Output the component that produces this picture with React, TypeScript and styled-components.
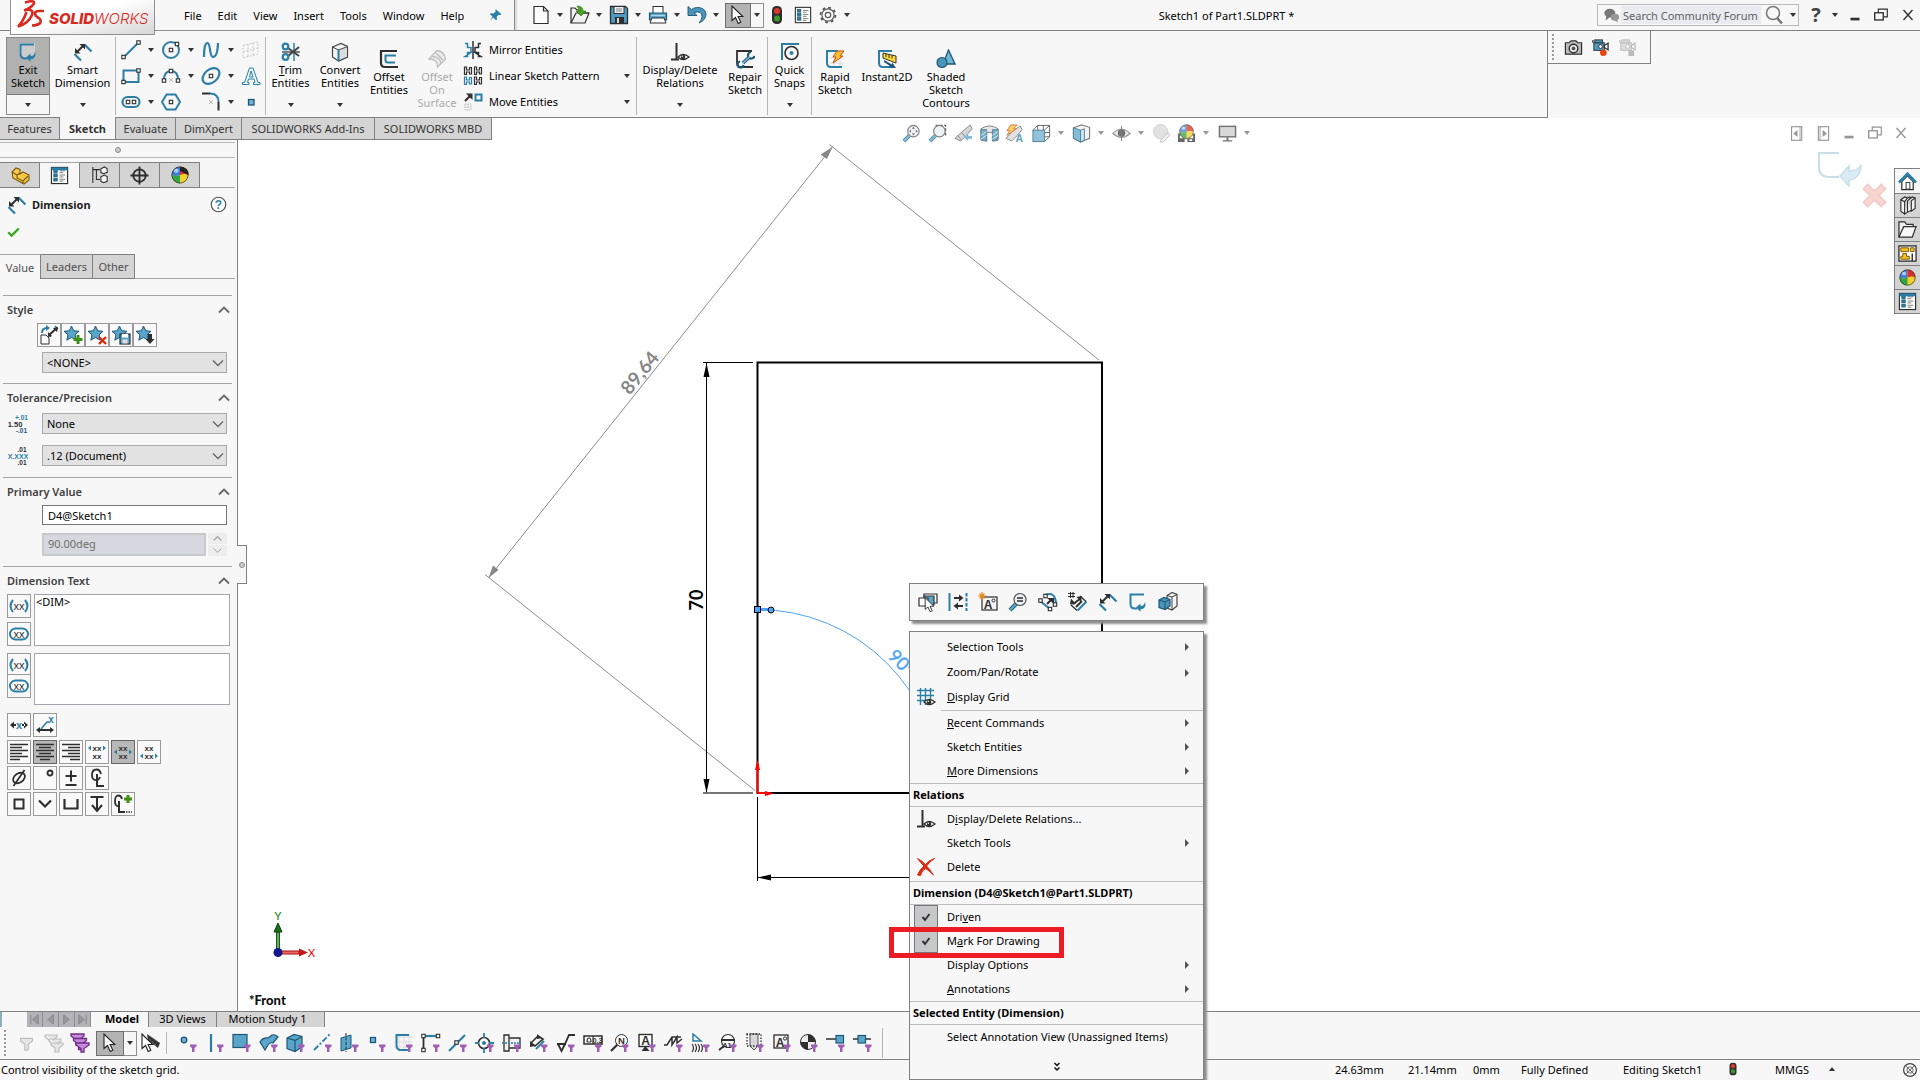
import React from 'react';
import styled, { createGlobalStyle, css } from 'styled-components';

const FONT = `"Noto Sans", "Open Sans", "Segoe UI", sans-serif`;
const LINE = '#808080';
const FACE = '#f7f7f7';
const TAB = '#d4d4d4';
const B = '#2b7fa6';
const N = '#1d5676';
const D = '#2f2f2f';
const L = '#6fb5d6';

const Global = createGlobalStyle`
  * { box-sizing: border-box; }
  html, body { margin: 0; background: #fff; }
  body, button, input, select, textarea { font-family: ${FONT}; font-size: 11px; line-height: 13px; color: #000; }
  button, input, select, textarea { margin: 0; border-radius: 0; }
  button { padding: 0; border: 0; background: none; }
  svg { display: block; flex: none; }
`;

/* ---------- icon drawings, all on a 20 x 20 grid ---------- */

const line = (d: string, c = D, w = 1.5) => <path d={d} fill="none" stroke={c} strokeWidth={w} />;
const node = (x: number, y: number, s = 3.4) => (
  <rect x={x - s / 2} y={y - s / 2} width={s} height={s} fill="#fff" stroke={D} strokeWidth="1.1" />
);
const Star = () => (
  <path d="M8.500 1l2.200 4.800 5.300.5-4 3.600 1.200 5.300-4.700-2.800-4.700 2.800L5 9.900 1 6.300l5.300-.5z" fill="#5aa6ca" stroke={N} strokeWidth="1" />
);
const Eye = ({ x = 12, y = 15 }) => (
  <g transform={`translate(${x} ${y})`}>
    <path d="M-5 0Q0-5 6 0Q0 5-5 0z" fill="#fff" stroke={D} strokeWidth="1.300" />
    <circle r="2.300" fill={D} />
    <circle cx="-.7" cy="-.7" r=".7" fill="#fff" />
  </g>
);
const Funnel = () => <path d="M12 11.500h6.500v2l-2 1.500v4h-2.500v-4l-2-1.500z" fill="#a05fb5" />;
const Dim = () => (
  <>
    {line('M11.500 2.500L18.500 9.500', B, 2.200)}
    {line('M1.500 12L8 18.500', B, 2.200)}
    {line('M4 10L10 4', D, 2)}
    <path d="M2 11.500V6l5.500 5.500zM12 2v5.500L6.500 2z" fill={D} />
  </>
);
const Corner = () => (
  <>
    {line('M16 2.500H2.500V12Q2.500 16.500 7 16.500H9', B, 2)}
    <path d="M8 15.500l4.500-4v2.500q4 0 4.500-4.500 2 7-4.500 8v2.300z" fill={B} />
  </>
);
const Ball = ({ r = 8, cx = 10, cy = 10 }) => (
  <g transform={`translate(${cx} ${cy}) scale(${r / 8})`}>
    <circle r="8" fill="#f0cf2e" />
    <path d="M0 0V-8A8 8 0 0 0-8 0Q-4 2 0 0z" fill="#3f7fdc" />
    <path d="M0 0V-8A8 8 0 0 1 8 0Q4-2 0 0z" fill="#dc2f2a" />
    <path d="M0 0Q-4 2-8 0A8 8 0 0 0 0 8z" fill="#35a445" />
    <ellipse cx="-3.500" cy="-4" rx="2.200" ry="1.800" fill="#fff" opacity=".6" />
    <circle r="7.600" fill="none" stroke="#333" strokeWidth=".7" />
  </g>
);
const Lens = ({ inner }: { inner?: React.ReactNode }) => (
  <>
    {line('M2 18L8 12', N, 4)}
    {line('M2 18L8 12', '#5aa6ca', 2.400)}
    <circle cx="12" cy="7.500" r="6" fill="#e9eff3" stroke="#555" strokeWidth="1.200" />
    {inner}
  </>
);
const List = () => (
  <>
    <rect x="1.500" y="1.500" width="17" height="17" fill="#fff" stroke={D} strokeWidth="1.200" />
    {[5, 9.500, 14].map((y) => (
      <React.Fragment key={y}>
        <rect x="4" y={y - 1.200} width="3.600" height="3" fill={B} stroke={N} strokeWidth=".8" />
        {line(`M10 ${y}H16M10 ${y + 2}H14`, '#777', 1)}
      </React.Fragment>
    ))}
  </>
);
const Light = () => (
  <>
    <rect x="5" y="1" width="10" height="18" rx="4.500" fill={D} />
    <circle cx="10" cy="6" r="3" fill="#e0362a" />
    <circle cx="10" cy="13.500" r="3" fill="#3b9a2a" />
  </>
);
const Cursor = () => <path d="M4 1v14.500l3.500-3 2.700 6 2.600-1.200-2.700-5.800h4.700z" fill="#fff" stroke="#222" strokeWidth="1.100" />;
const Glyph = ({ x, y, s, c = D, w = 700, children }: { x: number; y: number; s: number; c?: string; w?: number; children: string }) => (
  <text x={x} y={y} fontSize={s} fill={c} fontWeight={w} textAnchor="middle" fontFamily="Liberation Sans, sans-serif">{children}</text>
);
const Camera = ({ c = B, s = N }) => (
  <>
    <rect x="3" y="5" width="11" height="8" fill={c} stroke={s} />
    <rect x="4" y="2" width="8" height="3" fill={c} stroke={s} />
    <path d="M14 8l4-2.500v7L14 10zM2 2v3" fill="none" stroke={s} strokeWidth="1.300" />
    <circle cx="10" cy="9" r="2" fill="#fff" stroke={s} />
  </>
);

const icons: Record<string, React.ReactNode> = {
  exit: <Corner />,
  exitLight: <><path d="M1 1h16v15H8L1 12z" fill="#fff" opacity=".35" /><Corner /></>,
  dim: <Dim />,
  line: <>{line('M2.500 17.500L17.500 2.500', B, 2)}{node(2.500, 17)}{node(17.500, 2.500)}</>,
  circle: <><circle cx="10" cy="10" r="8" fill="none" stroke={B} strokeWidth="2" />{node(10, 10)}{node(16, 4)}</>,
  spline: line('M3 17Q3 3 6.500 3C10 3 8 17 12 17Q16.500 17 17 3', B, 2.200),
  plane: <path d="M2 5.500L17 2v12L2 18zM2 12L17 8M7 4v13M12 3v13" fill="none" stroke="#c9c9c9" strokeDasharray="2 1.400" />,
  rect: <>{line('M2.500 4.500H17.500V16H2.500z', B, 2)}{node(17.500, 4.500)}{node(2.500, 16)}</>,
  arc: <>{line('M3 14Q3 5 10 5Q17 5 17 14', B, 2)}{node(3, 14.500)}{node(17, 14.500)}{node(10, 5)}{line('M8 12l4 4M12 12l-4 4', '#bbb', 1)}</>,
  ellipse: <><ellipse cx="10" cy="10" rx="9.500" ry="6.500" transform="rotate(-40 10 10)" fill="none" stroke={B} strokeWidth="2.200" />{node(10, 10)}</>,
  text: <path d="M8.500 2h3.500l5 14.500h2v2h-6.500v-2H14l-1-3.500H7.500l-1 3.500h1.500v2H1.500v-2h2zM8.500 11H12l-2-6z" fill="#eef6fa" stroke={B} strokeWidth="1" />,
  slot: <><rect x="1.500" y="5" width="17" height="10" rx="5" fill="none" stroke={B} strokeWidth="2.200" />{node(7, 10)}{node(13, 10)}</>,
  polygon: <><path d="M5.500 2.500h9L19 10l-4.500 7.500h-9L1 10z" fill="none" stroke={B} strokeWidth="2" />{node(10, 10)}</>,
  fillet: <>{line('M1 1.500H9', D, 2)}{line('M9 1.500Q17.500 1.500 17.500 10', B, 2)}{line('M17.500 10V18.500', D, 2)}{line('M8 8l4 4M12 8l-4 4', '#bbb', 1)}</>,
  point: <rect x="7.500" y="7.500" width="5.500" height="5.500" fill={L} stroke={N} strokeWidth="1.300" />,
  trim: <>{line('M1 10H19', '#555', 1.500)}{line('M13 1V19', B, 1.500)}{line('M7 6L18 14M7 14L18 5', '#444', 2)}<circle cx="4.500" cy="4.500" r="2.800" fill="none" stroke={B} strokeWidth="2.200" /><circle cx="4.500" cy="15" r="2.800" fill="none" stroke={B} strokeWidth="2.200" /></>,
  convert: <><path d="M2.500 5L11 1.500 17.500 4.500V15L8.500 19l-6-4z" fill="#f4f4f4" stroke="#444" strokeWidth="1.200" /><path d="M8.500 8l9-3.500V15l-9 4z" fill="#dcdcdc" stroke="#444" />{line('M2.500 5L8.500 8', '#444', 1)}{line('M8.500 7.500V19', B, 2)}</>,
  offset: <>{line('M18 2H2V14Q2 18 6 18H19', D, 2.200)}{line('M17 6.500H6.500V11Q6.500 13.500 9 13.500H16', B, 2)}</>,
  offsetSurf: <path d="M2 10L10 1.500Q17 2 18.500 10L10.500 18Q11 10 2 10zM5.500 7.500Q13 8 14 14.500M9 4l7 7" fill="#ececec" stroke="#bdbdbd" strokeWidth="1.300" />,
  mirror: <>{line('M10 1V19', D, 1.500)}{line('M2 3.500h2.500v4H8M8 12.500H4.500v4H2zM8 7v6', B, 1.500)}{line('M18 3.500h-2.500v4H12M12 12.500h3.500v4H18zM12 7v6', D, 1.500)}</>,
  pattern: <>{[[0, 0, D], [10, 0, D], [0, 10, B], [10, 10, D]].map(([x, y, c]) => (
    <path key={`${x}${y}`} transform={`translate(${x} ${y})`} d="M1.500 1h2v3h3V1.500h2v6.500h-2V6h-3v2.500h-2z" fill="none" stroke={c as string} strokeWidth="1.200" />
  ))}</>,
  move: <><rect x="12.500" y="2.500" width="6" height="6" fill="none" stroke={B} strokeWidth="2" />{line('M2 9L7 4', D, 2.200)}<path d="M3 1.500h6.500V8z" fill={D} /><path d="M2 12h6v6H2zM2 15h6M5 12v6" fill="none" stroke="#bbb" strokeDasharray="1.500 1" /></>,
  relations: <>{line('M6.500 1V17.500M1 17.500H9', D, 2)}<Eye x={13} y={15} /></>,
  repair: <>{line('M17 2H2V14Q2 18 6 18H18', D, 1.800)}<path d="M8 14L14.500 8" stroke={N} strokeWidth="3.600" /><path d="M5 12.500a3 3 0 1 0 3.500 3.500M13.500 8a3.300 3.300 0 0 1 2.500-5M14.500 9a3.300 3.300 0 0 0 5-2" fill="none" stroke={N} strokeWidth="2.200" /><path d="M7.500 14.500L14.500 8" stroke="#8cc4de" strokeWidth="1.400" /></>,
  snaps: <>{line('M1 2H19M2 1V18', B, 2)}<circle cx="11.500" cy="11" r="6.500" fill="none" stroke={D} strokeWidth="1.600" /><circle cx="11.500" cy="11" r="2" fill={B} /></>,
  rapid: <>{line('M5 9H19M5 14H19M9 5V19M15 5V19', '#ddd', 1)}{line('M13 2H2V14Q2 18 6 18H17', B, 2)}<path d="M12 2h7l-4 5h3L8 14l3-6H8z" fill="#f6c02d" stroke="#c4521b" strokeWidth="1" /></>,
  instant: <>{line('M15 2H2V14Q2 18 6 18H17', B, 2)}<path d="M6 4l13 3v7L6 9z" fill="#ffd83a" stroke="#333" />{line('M9 5v3M12 6v3M15 6.500v3', '#333', 1)}<path d="M7 11l8 4.500v-2.500l4 6-7-.5 1-1.500L7 13z" fill={N} /></>,
  shaded: <><path d="M12.500 1L19 15H7z" fill={L} stroke={N} strokeWidth="1.300" /><circle cx="6" cy="13.500" r="5" fill="#4b95ba" stroke={N} strokeWidth="1.200" /></>,
  file: <><path d="M3 1.500h9.500L17 6v12.500H3z" fill="#fff" stroke={D} strokeWidth="1.200" />{line('M12.500 1.500V6H17', D, 1.200)}</>,
  open: <><path d="M1 18V3h4l2 2h4v3h8l-4 10z" fill="#f2f2f2" stroke={D} strokeWidth="1.200" />{line('M1 18L6 8h13', D, 1.200)}<path d="M7 1q6 0 6 5h3l-5 5-5-5h3q0-3-2-5z" fill="#47a31c" stroke="#2b7010" strokeWidth=".6" /></>,
  save: <><path d="M1.500 1.500h15l2 2v15h-17z" fill="#4e9cc2" stroke={D} strokeWidth="1.300" /><rect x="5" y="1.500" width="10" height="7" fill="#f0f0f0" stroke={D} /><rect x="6" y="12" width="9" height="6.500" fill={D} /><rect x="8" y="13" width="2" height="5" fill="#ddd" />{line('M7 4h6M7 6h6', '#888', 1)}</>,
  print: <><rect x="5" y="1.500" width="10" height="7" fill="#fff" stroke={D} /><path d="M1.500 8h17v7h-17z" fill="#4e9cc2" stroke={N} strokeWidth="1.200" /><path d="M4 13h12l2 5H2z" fill="#fff" stroke={D} />{line('M3 10.500H17', '#a7d6eb', 1.500)}</>,
  undo: <path d="M1 1.500v9h9L7 7.500q8-2 8 4 0 3-3 6.500 7-3 7-9Q18 2 9.500 2.500 6 3 4.500 4.500z" fill="#4b95ba" stroke={N} strokeWidth=".9" />,
  cursor: <Cursor />,
  light: <Light />,
  list: <List />,
  gear: <><circle cx="10" cy="10" r="6.800" fill="none" stroke="#555" strokeWidth="1.300" /><circle cx="10" cy="10" r="8.300" fill="none" stroke="#555" strokeWidth="2" strokeDasharray="3 3.520" /><circle cx="10" cy="10" r="3" fill="none" stroke="#555" strokeWidth="1.300" /></>,
  pin: <path d="M10 2l8 7-2 1-2-.5-3 3 .5 4-1.500 1-4-4L1.500 18 5 12 1 8.500l1.500-1 4 .5 3-3-.5-2z" fill={B} />,
  chat: <><ellipse cx="8" cy="7" rx="6.500" ry="5" fill="#777" /><path d="M4 10l-1 6 5-4z" fill="#777" /><ellipse cx="14" cy="12" rx="5" ry="4" fill="#999" /><path d="M16 14l2 4-5-2z" fill="#999" /></>,
  search: <><circle cx="9" cy="8" r="6.500" fill="none" stroke="#777" strokeWidth="1.500" />{line('M13 13L18 18.500', '#777', 2.600)}</>,
  min: <rect x="5" y="13" width="10" height="3" fill={D} />,
  restore: <>{line('M7 7V3.500H17V12H13', D, 1.300)}<rect x="3" y="7.500" width="9.500" height="8" fill="none" stroke={D} strokeWidth="1.500" /></>,
  close: line('M5 4.500L15 15.500M15 4.500L5 15.500', D, 1.500),
  snapshot: <><path d="M1.500 5h4l2-2h5l2 2h4v12h-17z" fill="#bdbdbd" stroke={D} strokeWidth="1.300" /><circle cx="10" cy="11" r="4.500" fill="#eee" stroke={D} strokeWidth="1.500" /><circle cx="10" cy="11" r="2" fill="#555" /></>,
  record: <><Camera c="#4e9cc2" s={D} /><circle cx="13" cy="15.500" r="3.500" fill="#e8420f" /></>,
  stop: <><Camera c="#ddd" s="#bbb" /><rect x="11" y="13" width="6" height="6" fill="#bbb" /></>,
  zoomFit: <Lens inner={<path d="M12 3l1.500 2h-3zM12 12l1.500-2h-3zM7.500 7.500l2-1.500v3zM16.500 7.500l-2-1.500v3z" fill={D} />} />,
  zoomArea: <><path d="M8 1.500h10.500v12" fill="none" stroke={D} strokeDasharray="3 1.500" strokeWidth="1.300" /><Lens /></>,
  prevView: <><path d="M1 15l10-9 6-5 2 4-5 6-7 7z" fill="#c9c9c9" stroke="#666" />{line('M4 12l4 5M8 9l4 5', '#666', 1)}<path d="M10 14l5-4v2.500h4v3h-4V18z" fill="#5aa6ca" /></>,
  section: <><path d="M1 5Q10-1 19 5v12l-5 1V9H7v9l-6-1z" fill="#dedede" stroke="#555" /><path d="M1 6h6v12l-6-2zM13 6h6v10l-6 2z" fill="#4b95ba" stroke={N} />{line('M1 12l6-4M1 16l6-4M13 12l6-4M13 16l6-4', '#cde6f1', 1)}</>,
  annView: <><path d="M1 15l8-8 7-5 2 4-5 6-6 6z" fill="#d8d8d8" stroke="#666" /><path d="M6 1h7l-4 4h3L2 12l3-5H2z" fill="#f6c02d" stroke="#c4521b" /><Glyph x={15} y={19} s={11} c={B}>A</Glyph></>,
  viewCube: <><path d="M6 1.500h12.500v12H6zM1 6.500l5-5M13 6.500l5.500-5M13 18.500l5.500-5M12 1.500v5M13 9h5" fill="none" stroke={D} /><rect x="1" y="6.500" width="12" height="12" fill="#6db0d0" stroke={N} /></>,
  display: <><path d="M1.500 4L10 1l8.500 2.500V15L9 19l-7.500-4z" fill="#f0f0f0" stroke="#555" strokeWidth="1.200" /><path d="M1.500 4L9 6.500V19l-7.500-4z" fill="#5aa6ca" stroke={N} /><path d="M9 6.500l4-1.500v12L9 19z" fill="#bfe0ee" stroke={N} /></>,
  hide: <><path d="M1 10Q10 1 19 10Q10 18 1 10z" fill="#e8e8e8" stroke="#777" strokeWidth="1.200" /><circle cx="10" cy="9.500" r="4" fill="#444" />{line('M10 2V18', '#555', 1)}</>,
  appearOff: <><circle cx="9" cy="8" r="7.500" fill="#d9d9d9" stroke="#c4c4c4" /><path d="M9 17l8-8 2 2-7 8-3 0z" fill="#eee" stroke="#aaa" /></>,
  scene: <><rect x="1" y="10" width="18" height="9" fill="#333" /><path d="M3 12h3v3H3zM14 12h3v3h-3zM8 16h3v3H8zM13 16h3v2h-3z" fill="#fff" /><Ball r={7.500} cx={10} cy={8} /></>,
  monitor: <><rect x="1.500" y="2.500" width="17" height="11" fill="#ccc" stroke="#444" strokeWidth="1.500" /><path d="M9 14h2v3h4v1.500H5V17h4z" fill="#444" /></>,
  paneL: <><rect x="3" y="2" width="12" height="16" fill="none" stroke={D} strokeWidth="1.300" /><path d="M10 6v8L5 10z" fill={D} />{line('M13 2v16', D, 1)}</>,
  paneR: <><rect x="4" y="2" width="12" height="16" fill="none" stroke={D} strokeWidth="1.300" /><path d="M9 6v8l5-4z" fill={D} />{line('M6 2v16', D, 1)}</>,
  part: <path d="M2 7l4-4 4 1.500V9l3-2 6 3v5l-5 4L3 13zM2 7l5 3v3l6 3v3M13 16l5-5M7 10l3-2" fill="#f7c948" stroke="#7a5a10" strokeWidth="1.100" />,
  tree: <>{line('M2 1V19M2 4h8M6 4v11h4', D, 1.200)}<path d="M11 3l4-2 3 2v4l-4 1.500-3-1.500zM11 12l4-2 3 2v5l-4 1.500-3-1.500z" fill="#f4f4f4" stroke={D} strokeWidth="1.200" /></>,
  target: <><circle cx="10" cy="10" r="6.500" fill="none" stroke={D} strokeWidth="2" />{line('M10 .5V19.500M.5 10H19.500', D, 2)}</>,
  ball: <Ball r={8.500} />,
  ballDim: <><Ball r={8.500} /><path d="M10 2q9 0 8.500 8L10 6z" fill="#222" /></>,
  check: line('M3 11l4.500 4.500L17 6', '#3aa51c', 3),
  help: <><circle cx="10" cy="10" r="8.500" fill="#fff" stroke="#555" strokeWidth="1.400" /><Glyph x={10} y={15} s={14} c={B}>?</Glyph></>,
  web: <><circle cx="10" cy="10" r="8" fill="#fff" stroke="#444" strokeWidth="1.600" /><circle cx="10" cy="10" r="4" fill="none" stroke="#444" />{line('M4 4l12 12M16 4L4 16', '#444', 1)}</>,
  styApply: <><path d="M2 10h5l3 3v6H2z" fill="#fff" stroke={D} />{line('M3 8Q3 3 8 3', B, 2)}<path d="M7 0l4 3-4 3z" fill={B} />{line('M16 1l3 3M9 9l3 3', B, 1.500)}{line('M10 10l8-7', D, 2)}<path d="M9 12l0-5 4 4zM19 2l-1 5-4-4z" fill={D} /></>,
  styAdd: <><Star />{line('M15 10v9M10.500 14.500h9', '#3d8f15', 3)}</>,
  styDel: <><Star />{line('M12 12l7 7M19 12l-7 7', '#dd2b12', 2.400)}</>,
  stySave: <><Star /><rect x="9" y="9" width="10" height="10" fill="#5aa6ca" stroke={D} strokeWidth="1.200" /><rect x="11" y="9" width="6" height="3.500" fill="#fff" /><rect x="11.500" y="14.500" width="5" height="4" fill="#ddd" /></>,
  styLoad: <><Star /><path d="M13 9h4v5h2.500L15 19l-4.500-5H13z" fill={D} /></>,
  tol: <><Glyph x={13.500} y={6} s={6.500} c={B}>+.01</Glyph><Glyph x={7} y={12.500} s={7.500} w={700}>1.50</Glyph><Glyph x={13.500} y={19} s={6.500} c={N}>-.01</Glyph></>,
  prec: <><Glyph x={14} y={6} s={6.500}>.01</Glyph><Glyph x={10} y={12.500} s={7} c={B}>X.XXX</Glyph><Glyph x={14} y={19} s={6.500}>.01</Glyph></>,
  paren: <><Glyph x={10} y={13.500} s={11} w={400}>xx</Glyph>{line('M4 4Q-1 10 4 16M16 4Q21 10 16 16', B, 2)}</>,
  oval: <><rect x="1" y="4.500" width="18" height="11" rx="5.500" fill="#fff" stroke={B} strokeWidth="2" /><Glyph x={10} y={13.500} s={11} w={400}>xx</Glyph></>,
  center: <><Glyph x={10} y={14} s={11} c={B}>x</Glyph><path d="M1 10l4-3.500v7zM19 10l-4-3.500v7zM4 9h3v2H4zM13 9h3v2h-3z" fill={D} /></>,
  leader: <><path d="M1 15l4-3v2h10v-2l4 3-4 3v-2H5v2z" fill={D} />{line('M6 14l6-7h2', B, 1.500)}<Glyph x={16} y={8} s={10} c={B}>x</Glyph></>,
  alignL: line('M1 2.500H19M1 5.500H13M1 8.500H19M1 11.500H13M1 14.500H19M1 17.500H11', D, 1.700),
  alignC: line('M1 2.500H19M4 5.500H16M1 8.500H19M4 11.500H16M1 14.500H19M5 17.500H15', D, 1.700),
  alignR: line('M1 2.500H19M7 5.500H19M1 8.500H19M7 11.500H19M1 14.500H19M9 17.500H19', D, 1.700),
  jTop: <><Glyph x={10} y={8.500} s={8}>xx</Glyph><Glyph x={10} y={17} s={8}>xx</Glyph><path d="M1 6l3-2.500v5zM19 6l-3-2.500v5z" fill={B} /></>,
  jMid: <><Glyph x={10} y={8.500} s={8}>xx</Glyph><Glyph x={10} y={17} s={8}>xx</Glyph><path d="M1 10l3-2.500v5zM19 10l-3-2.500v5z" fill={B} /></>,
  jBot: <><Glyph x={10} y={8.500} s={8}>xx</Glyph><Glyph x={10} y={17} s={8}>xx</Glyph><path d="M1 14l3-2.500v5zM19 14l-3-2.500v5z" fill={B} /></>,
  dia: <><ellipse cx="10" cy="10" rx="6.500" ry="4.500" transform="rotate(-35 10 10)" fill="none" stroke={D} strokeWidth="1.800" />{line('M4.500 18L15.500 2', D, 1.800)}</>,
  deg: <circle cx="15" cy="5" r="2.500" fill="none" stroke={D} strokeWidth="1.800" />,
  pm: line('M10 2.500V13.500M4.500 8H15.500M4.500 17H15.500', D, 2),
  cl: <>{line('M14 6Q13 1.500 9.500 1.500 5 1.500 5 7t4.500 5Q12 12 13 9', D, 1.800)}{line('M10 6V18h7', D, 2)}</>,
  sq: <rect x="5.500" y="5.500" width="9" height="9" fill="none" stroke={D} strokeWidth="2" />,
  vee: line('M4 6.500l6 6 6-6', D, 2.200),
  cbore: line('M3.500 5V14.500H16.500V5', D, 2.200),
  depth: <>{line('M3.500 3H16.500M10 3V16', D, 2)}{line('M5 11l5 6 5-6', D, 2)}</>,
  clMore: <>{line('M9 5Q8 1.500 5.500 1.500 2 1.500 2 7t3.500 5', D, 1.800)}{line('M6 7V18h6', D, 2)}{line('M15 1v8M11 5h8', '#3d8f15', 3)}<path d="M13 18h6" stroke={D} strokeWidth="1.500" strokeDasharray="1.500 1" /></>,
  addSel: <><path d="M6 5V2h13v9h-4" fill="#fff" stroke={D} strokeWidth="1.200" /><path d="M6 4h10v9H6z" fill="#5aa6ca" stroke={D} strokeWidth="1.200" /><path d="M1 6h9v8H1z" fill="#fff" stroke={D} strokeWidth="1.200" /><g transform="translate(4 5) scale(.8)"><Cursor /></g></>,
  smartMate: <>{line('M1.500 1V19', B, 2)}<path d="M18.500 1V19" stroke={B} strokeWidth="2" strokeDasharray="3.500 1.500" /><path d="M6 5h5V2.500L15.500 6 11 9.500V7H6zM15 13h-5v-2.500L5.500 14l4.500 3.500V15h5z" fill={D} /></>,
  newNote: <><rect x="4" y="5" width="15" height="13" fill="#f4f4f4" stroke={D} strokeWidth="1.200" /><Glyph x={10} y={16.500} s={12}>A</Glyph><circle cx="15.500" cy="8.500" r="1.500" fill="none" stroke={D} />{line('M4 0v8M0 4h8M1.500 1.500l5 5M6.500 1.500l-5 5', '#e08a1e', 1.200)}</>,
  zoomSel: <Lens inner={line('M9 6h6M9 9h6', D, 1.300)} />,
  sketchDim: <>{line('M2 9l10 8', B, 2)}{line('M7 3Q17-1 18 11', B, 2)}{node(2.500, 8.500)}{node(7.500, 4)}{node(17, 12.500)}{node(12, 17)}{line('M9 12l4-4', D, 2)}<path d="M9 6h7v6z" fill={D} /></>,
  autoDim: <>{line('M2.500 0v6M5 0v6M0 1.500h7M0 4.500h7', D, 1)}{line('M9.500 18.500L18.500 9.500', B, 2.200)}{line('M3 13L9 18.500M12 4L18 9.500', D, 1.300)}{line('M5 12L12 7', D, 2)}<path d="M2 12.500l1-6 5 5.500zM14 4l-5.500 1 4.500 5zM7 15l7-5" fill={D} />{line('M8 15L14 9', D, 2)}</>,
  bodyView: <><path d="M9 3.500l5-3 5 2V14l-5 4-5-2z" fill="#f4f4f4" stroke="#444" strokeWidth="1.200" />{line('M14 5v13M9 3.500l5 1.500 5-2.500', '#444', 1)}<path d="M1 8l5-2.500 6 2V14l-5 3.500-6-2z" fill="#4b95ba" stroke={N} strokeWidth="1.200" />{line('M1 8l6 2v7M7 10l5-2.500', N, 1)}</>,
  grid: <>{line('M4.500 1V18M9.500 1V18M14.500 1V12M1 3.500H18M1 8.500H18M1 13.500H9', B, 1.400)}<Eye x={13} y={15} /></>,
  del: <path d="M1.500 1.500Q9 5 17.500 18q-5-5-8-6.500Q6 13 4.500 18.500L1.500 18Q4 12 8 9 4 5 1.500 1.500zM18.500 1.500Q13 5 10.500 9l-1-1.500Q13 3 18.500 1.500z" fill="#dd2b12" stroke="#dd2b12" strokeWidth="1" />,
  house: <><path d="M4 10v8.500h12V10l-6-6z" fill="#fff" stroke={D} strokeWidth="1.300" /><rect x="8.500" y="11" width="4" height="7" fill="#fff" stroke={D} />{line('M1 11L10 2l9 9', B, 3)}</>,
  books: <path d="M3 4l4 2v13l-4-3zM7 6l3-4-3-1-4 3M7 6v13l3-2M10 5l4-3-2-1-3 2M10 5v12l4-2M14 5l4-3-3-1-3 2M14 5v11l4-3V2" fill="#f4f4f4" stroke={D} strokeWidth="1.200" />,
  folder: <><path d="M1 18V2h6l2 2.500h7V7" fill="#eee" stroke={D} strokeWidth="1.300" /><path d="M1 18L6 7h13l-4 11z" fill="#f7f7f7" stroke={D} strokeWidth="1.300" /></>,
  palette: <><rect x="1" y="2" width="18" height="16" fill="#fff" stroke={D} strokeWidth="1.400" /><path d="M3 4h8v4H3zM13 4h4v4h-4zM5 10h4v3h3v3H3v-3h2z" fill="#f4c21c" stroke="#7a5a10" />{line('M15 10v8', D, 1.500)}</>,
  props: <><List /><rect x="1.500" y="1.500" width="17" height="3" fill={B} /></>,
  funnelOff: <path d="M3 4h14v3l-5 4v7H8v-7L3 7z" fill="#e6e6e6" stroke="#bdbdbd" strokeWidth="1.300" />,
  funnelsOff: <path d="M1 2h12v2l-4 3M5 6h12v2l-4 3M7 10h12v2l-4 3v4h-4v-4l-4-3zM1 2v2l5 4M5 6v2l3 3" fill="#e6e6e6" stroke="#bdbdbd" strokeWidth="1.200" />,
  funnels: <>{['M1 1h13v2l-5 4v5H6V7L1 3z', 'M3.500 5.500h13v2l-5 4v5h-3v-5l-5-4z', 'M6 10h13v2l-5 3.500V19h-3v-3.500L6 12z'].map((d) => <path key={d} d={d} fill="#c58ad8" stroke="#6b2c86" strokeWidth="1.300" />)}</>,
  multi: <><path d="M6 1l13 9-2 5L7 7z" fill="#333" /><path d="M9 3l8 6M8 6l7 6" stroke="#888" strokeDasharray="1 1" /><g transform="translate(-3 0)"><Cursor /></g></>,
};

const filters: React.ReactNode[] = [
  <circle cx="6" cy="7" r="2.800" fill={L} stroke={N} strokeWidth="1.300" />,
  line('M6 1V19', B, 2.200),
  <rect x="1" y="1.500" width="14" height="13" fill="#5aa6ca" stroke={N} strokeWidth="1.200" />,
  <path d="M1 9Q4 4 9 5l4-3q3-1 6 2l-5 6q-3-1-5 2L6 17z" fill="#5aa6ca" stroke={N} strokeWidth="1.200" />,
  <><path d="M1 5l7-3.500 8 2V14l-7 4.500-8-3z" fill="#5aa6ca" stroke={N} strokeWidth="1.200" />{line('M1 5l8 2.500V18M9 7.500l7-4', N, 1.200)}</>,
  <path d="M1 17L17 1" stroke={B} strokeWidth="1.800" strokeDasharray="6 2 2 2" />,
  <><path d="M1 5l10-3v13L1 18z" fill="#5aa6ca" stroke={N} /><path d="M6 0v19" stroke={D} strokeDasharray="3 1.500" /></>,
  <rect x="3.500" y="4.500" width="5" height="5" fill={L} stroke={N} strokeWidth="1.300" />,
  <>{line('M0 4H19M0 9H19M0 14H19M5 0V19M10 0V19M15 0V19', '#ddd', 1)}{line('M15 2H2.500V12Q2.500 17 7 17H14', B, 2)}</>,
  <>{line('M2.500 3V17', D, 1.800)}{line('M2.500 3H17', B, 2.200)}{node(2.500, 3)}{node(17, 3)}{node(2.500, 17)}</>,
  <>{line('M1 18L17 2', B, 2.200)}{node(8.500, 9.500)}</>,
  <><circle cx="9" cy="10" r="5.500" fill="none" stroke={D} strokeWidth="1.600" />{line('M9 0V5M9 15V20M0 10H4M14 10H19', B, 1.800)}<circle cx="9" cy="10" r="2" fill={B} /></>,
  <><path d="M2 2h5v16H2zM7 5h11v10H7" fill="#f0f0f0" stroke={D} strokeWidth="1.300" /><path d="M0 10h19" stroke={B} strokeDasharray="2 1" strokeWidth="1.300" /></>,
  <>{line('M7 16L15 8', B, 2)}{line('M2 10L9 3l5 3-8 7z', D, 1.600)}<path d="M1 8l5 5-5 1zM8 1l5 4-5 1z" fill={D} /></>,
  line('M1 11h9M2 11l3.500 7L9 11 13 2h6', D, 1.800),
  <><rect x="1" y="3" width="18" height="8" fill="#fff" stroke={D} strokeWidth="1.500" />{line('M10 3v8M4 9h4M4 9Q4 5 6 5t2 4', D, 1.200)}<Glyph x={14.500} y={9.500} s={7}>0.3</Glyph></>,
  <>{line('M1 18L8 11', D, 2.200)}<circle cx="11.500" cy="7.500" r="6" fill="#fff" stroke={D} /><Glyph x={11.500} y={11} s={9.500}>N</Glyph></>,
  <><rect x="2" y="1.500" width="13" height="12" fill="#fff" stroke={D} strokeWidth="1.400" /><Glyph x={8.500} y={12} s={12}>A</Glyph><path d="M8.500 13l4 5h-8z" fill={D} /></>,
  line('M0 12h3l5-8h9M8 4v8l5-8v6l5-4', D, 1.500),
  <>{line('M2 1v7h8z', B, 1.500)}{line('M1 11q3 4 0 8M4 11q3 4 0 8M7 11q3 4 0 8M10 11q3 4 0 8', D, 1.200)}</>,
  <><circle cx="10" cy="8" r="6.500" fill="#fff" stroke={D} strokeWidth="1.200" />{line('M3 7h14M1 17l5-4', D, 1.800)}<Glyph x={9} y={14.500} s={7}>A1</Glyph></>,
  <><path d="M5 1h8v12l-4 4-4-4z" fill="#d8d8d8" stroke="#555" /><path d="M2 1v12h14V1z" fill="none" stroke={D} strokeDasharray="1.500 1.500" strokeWidth="1.300" /></>,
  <><rect x="2" y="2" width="14" height="13" fill="#f4f4f4" stroke={D} strokeWidth="1.300" /><Glyph x={8} y={13.500} s={12}>A</Glyph><circle cx="13" cy="5.500" r="1.600" fill="none" stroke={D} /></>,
  <><circle cx="9" cy="9" r="7.500" fill="#eee" stroke={D} /><path d="M9 9V1.500A7.500 7.500 0 0 1 16.500 9zM9 9v7.500A7.500 7.500 0 0 1 1.500 9z" fill={D} /></>,
  <>{line('M0 6h10', D, 1.500)}<rect x="10" y="2.500" width="7.500" height="7.500" fill="#5aa6ca" stroke={N} strokeWidth="1.200" /></>,
  <>{line('M0 6h18', D, 1.500)}<rect x="5" y="2.500" width="7.500" height="7.500" fill="#5aa6ca" stroke={N} strokeWidth="1.200" /></>,
];
const filterNames = ['Vertices', 'Edges', 'Faces', 'Surface bodies', 'Solid bodies', 'Axes', 'Planes', 'Sketch points', 'Sketches', 'Sketch segments', 'Midpoints', 'Center marks', 'Centerlines', 'Dimensions', 'Surface finish', 'Geometric tolerances', 'Notes', 'Datum features', 'Weld symbols', 'Weld beads', 'Datum targets', 'Cosmetic threads', 'Blocks', 'Dowel pins', 'Connection points', 'Routing points'];

const Icon = ({ n, s = 20 }: { n: string; s?: number }) => (
  <svg viewBox="0 0 20 20" width={s} height={s} aria-hidden="true">{icons[n]}</svg>
);

/* ---------- shared parts ---------- */

const Caret = styled.span<{ $w?: number; $up?: boolean; $c?: string }>`
  width: ${(p) => p.$w ?? 19}px;
  height: 4px;
  display: flex;
  justify-content: center;
  flex: none;
  &::after {
    content: '';
    border: 3px solid transparent;
    border-top: 4px solid ${(p) => p.$c ?? '#333'};
    border-bottom: 0;
    ${(p) => p.$up && css`transform: rotate(180deg);`}
  }
`;
const IconBtn = styled.button<{ $w?: number }>`
  width: ${(p) => p.$w ?? 20}px;
  height: 20px;
  display: flex;
  align-items: center;
  justify-content: center;
  flex: none;
`;
const Rule = styled.span<{ $h?: number; $m?: number }>`
  width: 1px;
  height: ${(p) => p.$h ?? 78}px;
  margin: 0 ${(p) => p.$m ?? 0}px;
  background: #b5b5b5;
  flex: none;
`;
const Dot = styled.span`
  width: 6px;
  height: 6px;
  border: 1px solid #8c8c8c;
  border-radius: 50%;
  background: #ccc;
`;
const Grip = styled.span<{ $h: number }>`
  width: 3px;
  height: ${(p) => p.$h}px;
  margin: 0 2px 0 3px;
  border-right: 2px dotted #9a9a9a;
  flex: none;
`;
const SelectTool = styled.span`
  display: flex;
  height: 25px;
  flex: none;
`;
const SelectMain = styled.button<{ $w: number }>`
  width: ${(p) => p.$w}px;
  display: flex;
  align-items: center;
  justify-content: center;
  background: #b3b3b3;
  border: 1px solid #6e6e6e;
`;
const SelectDrop = styled.button`
  width: 13px;
  display: flex;
  align-items: center;
  justify-content: center;
  border: 1px solid #8e8e8e;
  border-left: 0;
`;

/* ---------- page frame ---------- */

const Page = styled.div`
  min-height: 100vh;
  display: flex;
  flex-direction: column;
  background: #fff;
  overflow: hidden;
`;
const TitleBar = styled.header`
  height: 31px;
  display: flex;
  align-items: center;
  background: ${FACE};
  border-bottom: 1px solid ${LINE};
`;
const Logo = styled.div`
  align-self: flex-start;
  position: relative;
  z-index: 2;
  width: 145px;
  height: 35px;
  margin-left: 10px;
  padding: 0 0 6px 5px;
  display: flex;
  align-items: center;
  flex: none;
  gap: 4px;
  background: linear-gradient(165deg, #fff 45%, #d6d6d6);
  border: 1px solid #909090;
  border-top: 0;
  font: italic 800 15px/20px Inter, sans-serif;
  color: #d9291f;
  overflow: hidden;
`;
const LogoWord = styled.span`
  display: flex;
  padding-top: 9px;
`;
const Thin = styled.span`
  font-weight: 300;
`;
const Menus = styled.nav`
  display: flex;
  align-items: center;
  align-self: stretch;
  gap: 16px;
  width: 360px;
  padding-left: 29px;
  border-right: 1px solid #8a8a8a;
  box-shadow: 2px 0 1px #ddd;
  flex: none;
`;
const MenuLink = styled.button`
  height: 20px;
  flex: none;
`;
const Quick = styled.div`
  display: flex;
  align-items: center;
  padding-left: 16px;
  flex: none;
`;
const DocTitle = styled.h1`
  flex: 1;
  margin: 0;
  padding-left: 2px;
  text-align: center;
  font-size: 11px;
  font-weight: 400;
  white-space: nowrap;
`;
const SearchBox = styled.label`
  width: 202px;
  height: 22px;
  padding-left: 5px;
  display: flex;
  align-items: center;
  gap: 1px;
  border: 1px solid #b9b9b9;
  flex: none;
`;
const SearchInput = styled.input`
  width: 140px;
  height: 18px;
  border: 0;
  padding: 0 2px;
  background: #e9ebf1;
  outline: none;
  &::placeholder { color: #5f5f5f; opacity: 1; }
`;
const WinControls = styled.div`
  display: flex;
  align-items: center;
  padding-left: 7px;
  flex: none;
`;
const HelpMark = styled.button`
  width: 20px;
  font: 700 20px/20px "Open Sans", sans-serif;
  color: #444;
`;

const Ribbon = styled.div`
  display: flex;
  height: 87px;
  background: ${FACE};
`;
const Commands = styled.div`
  flex: 1;
  display: flex;
  padding: 6px 0 0 6px;
  border: 1px solid ${LINE};
  border-width: 0 1px 1px 0;
`;
const RibbonSide = styled.div`
  width: 372px;
`;
const Capture = styled.div`
  width: 103px;
  height: 33px;
  display: flex;
  align-items: center;
  gap: 7px;
  border: 1px solid ${LINE};
  border-width: 0 1px 1px 0;
  background: ${FACE};
`;
const Command = styled.button<{ $w: number; $low?: boolean; $off?: boolean }>`
  width: ${(p) => p.$w}px;
  height: 78px;
  padding-top: ${(p) => (p.$low ? 12 : 5)}px;
  display: flex;
  flex-direction: column;
  align-items: center;
  flex: none;
  gap: 1px;
  line-height: 13px;
  color: ${(p) => (p.$off ? '#aaa' : '#000')};
  white-space: pre;
`;
const CommandCaret = styled.span`
  margin-top: 13px;
`;
const Lines = styled.span`
  display: flex;
  flex-direction: column;
  align-items: center;
`;
const ExitTool = styled.div`
  width: 44px;
  height: 78px;
  display: flex;
  flex-direction: column;
  border: 1px solid #8a8a8a;
  flex: none;
`;
const ExitMain = styled.button`
  height: 57px;
  padding-top: 4px;
  display: flex;
  flex-direction: column;
  align-items: center;
  gap: 1px;
  background: #b1b1b1;
  border-bottom: 1px solid #777;
  white-space: pre;
`;
const ExitDrop = styled.button`
  flex: 1;
  display: flex;
  align-items: center;
  justify-content: center;
`;
const SketchTools = styled.div`
  display: grid;
  grid-template-columns: 40px 40px 40px 20px;
  grid-template-rows: 26px 26px 26px;
  align-items: center;
  margin: 0 4px 0 5px;
`;
const ToolCell = styled.button`
  display: flex;
  align-items: center;
  height: 24px;
`;
const PatternTools = styled.div`
  width: 175px;
  padding-left: 2px;
  display: grid;
  grid-template-rows: 26px 26px 26px;
`;
const PatternRow = styled.button`
  display: flex;
  align-items: center;
  gap: 6px;
  text-align: left;
`;
const Grow = styled.span`
  flex: 1;
  padding-bottom: 2px;
  white-space: nowrap;
`;

const TabRow = styled.div`
  height: 22px;
  display: flex;
  align-items: flex-start;
  background: #fff;
  position: relative;
  z-index: 1;
`;
const ManagerTabs = styled.div`
  display: flex;
  width: 492px;
  flex: none;
`;
const ManagerTab = styled.button<{ $w: number; $on?: boolean }>`
  width: ${(p) => p.$w}px;
  height: 22px;
  background: ${(p) => (p.$on ? FACE : TAB)};
  border: 1px solid ${LINE};
  border-width: 0 1px 1px 0;
  color: #333;
  font-weight: ${(p) => (p.$on ? 700 : 400)};
  ${(p) => p.$on && css`margin-top: -1px; height: 23px;`}
`;
const ViewBar = styled.div`
  flex: 1;
  padding: 5px 0 0 410px;
  display: flex;
  opacity: 0.75;
`;
const ViewItem = styled.button<{ $w: number }>`
  width: ${(p) => p.$w}px;
  height: 20px;
  display: flex;
  align-items: center;
  gap: 2px;
`;
const DocControls = styled.div`
  display: flex;
  gap: 6px;
  padding: 5px 9px 0 0;
  opacity: 0.5;
`;

const Work = styled.div`
  flex: 1;
  display: flex;
  min-height: 0;
`;

/* ---------- property manager ---------- */

const Panel = styled.aside`
  width: 238px;
  padding-top: 2px;
  flex: none;
  background: ${FACE};
  border-right: 1px solid ${LINE};
`;
const PanelGrip = styled.div`
  width: 235px;
  height: 16px;
  display: flex;
  align-items: center;
  justify-content: center;
  border: 1px solid #b5b5b5;
  border-width: 1px 0;
`;
const PmTabs = styled.div<{ $top: number; $h: number }>`
  display: flex;
  width: 235px;
  height: ${(p) => p.$h}px;
  margin-top: ${(p) => p.$top}px;
  &::after { content: ''; flex: 1; border-bottom: 1px solid #a5a5a5; }
`;
const PmTab = styled.button<{ $w: number; $on?: boolean }>`
  width: ${(p) => p.$w}px;
  display: flex;
  align-items: center;
  justify-content: center;
  border: 1px solid ${LINE};
  border-left: 0;
  background: ${TAB};
  color: #505050;
  ${(p) => p.$on && css`background: ${FACE}; border-bottom: 0; border-top-color: #a5a5a5;`}
`;
const PmHead = styled.div`
  height: 33px;
  padding: 0 9px 0 7px;
  display: flex;
  align-items: center;
  gap: 5px;
`;
const PmTitle = styled.h2`
  flex: 1;
  margin: 0;
  font-size: 11px;
  font-weight: 700;
  color: #222;
`;
const Accept = styled.div`
  height: 33px;
  margin-bottom: 0;
  padding-left: 3px;
`;
const Group = styled.section<{ $h: number; $top?: number }>`
  height: ${(p) => p.$h}px;
  margin: ${(p) => p.$top ?? 0}px 5px 0 3px;
  border-top: 1px solid #a5a5a5;
`;
const GroupHead = styled.h3`
  height: 27px;
  margin: 0;
  padding: 0 2px 0 4px;
  display: flex;
  align-items: center;
  justify-content: space-between;
  font-size: 11px;
  font-weight: 600;
  color: #404040;
`;
const Chevron = ({ up, s = 12 }: { up?: boolean; s?: number }) => (
  <svg width={s} height={s} viewBox="0 0 12 12" aria-hidden="true">
    <path d={up ? 'M1 8.500l5-5 5 5' : 'M1 3.500l5 5 5-5'} fill="none" stroke="#666" strokeWidth={up ? 1.800 : 1.300} />
  </svg>
);
const StyleRow = styled.div`
  display: flex;
  padding-left: 34px;
`;
const Tool = styled.button<{ $on?: boolean; $join?: boolean }>`
  width: 24px;
  height: 24px;
  display: flex;
  align-items: center;
  justify-content: center;
  border: 1px solid ${(p) => (p.$on ? '#666' : '#9a9a9a')};
  background: ${(p) => (p.$on ? '#b8b8b8' : '#f9f9f9')};
  ${(p) => p.$join && css`margin-top: -3px;`}
`;
const Field = styled.label<{ $top?: number }>`
  display: flex;
  align-items: center;
  padding-left: 5px;
  margin-top: ${(p) => p.$top ?? 0}px;
`;
const FieldIcon = styled.span`
  width: 34px;
  height: 20px;
`;
const SelectWrap = styled.span`
  width: 185px;
  height: 21px;
  display: grid;
  align-items: center;
  > * { grid-area: 1 / 1; }
  > svg { justify-self: end; margin-right: 3px; pointer-events: none; }
`;
const Select = styled.select`
  width: 100%;
  height: 21px;
  padding: 0 4px;
  appearance: none;
  border: 1px solid #a9a9a9;
  background: #e2e2e2;
`;
const TextBox = styled.input`
  width: 185px;
  height: 20px;
  padding: 0 5px;
  border: 1px solid #777;
  background: #fff;
`;
const ValueBox = styled.input`
  width: 164px;
  height: 23px;
  padding: 0 4px 3px;
  border: 2px solid #c8c8c8;
  background: #d5d9df;
  color: #6d6d6d;
`;
const Spin = styled.span`
  width: 19px;
  margin-left: 2px;
  display: grid;
  gap: 1px;
  opacity: 0.6;
`;
const SpinBtn = styled.button`
  height: 11px;
  display: grid;
  place-items: center;
  background: #e8e8e8;
`;
const DimBlock = styled.div`
  display: flex;
  gap: 3px;
  padding-left: 4px;
  margin-bottom: 7px;
`;
const DimButtons = styled.div<{ $gap: number }>`
  display: flex;
  flex-direction: column;
  gap: ${(p) => p.$gap}px;
`;
const DimText = styled.textarea`
  display: block;
  width: 196px;
  height: 52px;
  padding: 0 1px;
  border: 1px solid #a5a5ad;
  background: #fff;
  resize: none;
`;
const ToolRow = styled.div<{ $top?: number }>`
  display: flex;
  gap: 2px;
  padding: 0 0 0 4px;
  margin: ${(p) => p.$top ?? 0}px 0 2px;
`;

/* ---------- graphics area ---------- */

const Viewport = styled.main`
  flex: 1;
  position: relative;
  display: flex;
  justify-content: flex-end;
  align-items: flex-start;
  background: #fff;
`;
const Drawing = styled.svg`
  position: absolute;
  inset: 0;
  width: 100%;
  height: 100%;
`;
const SplitHandle = styled.div`
  position: absolute;
  left: -1px;
  top: 405px;
  width: 10px;
  height: 39px;
  display: flex;
  align-items: center;
  justify-content: center;
  background: ${FACE};
  border: 1px solid ${LINE};
  border-left: 0;
`;
const Confirm = styled.div`
  display: flex;
  padding: 11px 7px 0 0;
  opacity: 0.25;
  position: relative;
`;
const ConfirmCancel = styled.span`
  padding-top: 32px;
`;
const TaskPane = styled.nav`
  width: 26px;
  margin-top: 28px;
  position: relative;
  border: 1px solid ${LINE};
  border-right: 0;
`;
const TaskTab = styled.button<{ $on?: boolean }>`
  width: 25px;
  height: 24px;
  display: flex;
  align-items: center;
  justify-content: center;
  background: ${(p) => (p.$on ? FACE : TAB)};
  & + & { border-top: 1px solid ${LINE}; }
`;

/* ---------- context menu ---------- */

const Popup = styled.div`
  position: absolute;
  z-index: 5;
  left: 671px;
  top: 443px;
  width: 295px;
  display: flex;
  flex-direction: column;
  gap: 10px;
`;
const shell = css`
  background: ${FACE};
  border: 1px solid ${LINE};
  box-shadow: 3px 3px 2px #8f8f8f;
`;
const MiniBar = styled.div`
  ${shell}
  height: 38px;
  padding-left: 8px;
  display: flex;
  align-items: center;
  gap: 10px;
`;
const Menu = styled.div`
  ${shell}
  height: 449px;
  padding-top: 2px;
`;
const Item = styled.button<{ $h?: number }>`
  width: 100%;
  height: ${(p) => p.$h ?? 24}px;
  padding: 0 14px 0 4px;
  display: flex;
  align-items: center;
  gap: 9px;
  text-align: left;
`;
const Slot = styled.span<{ $on?: boolean }>`
  width: 24px;
  height: 24px;
  display: grid;
  place-items: center;
  flex: none;
  ${(p) => p.$on && css`background: #c6c7c9; border: 1px solid #777;`}
`;
const Arrow = styled.span`
  border: 4px solid transparent;
  border-left-color: #555;
  border-right: 0;
`;
const Heading = styled.div<{ $gap?: boolean }>`
  height: 24px;
  margin-top: ${(p) => (p.$gap ? 2 : 0)}px;
  padding: 4px 3px;
  border: 1px solid #bdbdbd;
  border-width: 1px 0;
  font-weight: 700;
  white-space: nowrap;
`;
const Split = styled.div`
  height: 1px;
  margin: 1px 0 0 31px;
  background: #bdbdbd;
`;
const More = styled.button`
  width: 100%;
  height: 36px;
  display: grid;
  place-items: center;
`;
const Highlight = styled.div`
  position: absolute;
  left: -20px;
  top: 344px;
  width: 175px;
  height: 31px;
  border: 5px solid #ed1c24;
`;

/* ---------- bottom bars ---------- */

const ModelTabs = styled.div`
  height: 16px;
  display: flex;
  background: ${FACE};
  border-top: 1px solid ${LINE};
`;
const TealMark = styled.span`
  width: 2px;
  margin-right: 25px;
  background: #8fb0ba;
`;
const NavBtn = styled.button`
  width: 16px;
  height: 15px;
  display: grid;
  place-items: center;
  background: #b4b4b8;
  border-right: 1px solid #8e8e8e;
`;
const ModelTab = styled.button<{ $w: number; $on?: boolean; $r?: number }>`
  width: ${(p) => p.$w}px;
  height: 15px;
  padding: 0 ${(p) => p.$r ?? 0}px 3px ${(p) => (p.$on ? 5 : 0)}px;
  background: ${(p) => (p.$on ? FACE : TAB)};
  border-right: 1px solid ${LINE};
  font-weight: ${(p) => (p.$on ? 700 : 400)};
`;
const FilterBar = styled.div`
  height: 33px;
  display: flex;
  align-items: center;
  background: ${FACE};
  border-bottom: 1px solid ${LINE};
`;
const FilterBtns = styled.div`
  display: flex;
  padding-left: 10px;
`;
const FilterBtn = styled.button`
  width: 27px;
  height: 22px;
  display: flex;
  align-items: center;
  flex: none;
`;
const StatusBar = styled.footer`
  height: 20px;
  padding: 0 2px 0 1px;
  display: flex;
  align-items: center;
  background: ${FACE};
`;
const Status = styled.span<{ $w: number }>`
  width: ${(p) => p.$w}px;
  padding-bottom: 2px;
  flex: none;
`;

const qat: [string, string, number][] = [
  ['file', 'New', 39], ['open', 'Open', 39], ['save', 'Save', 39], ['print', 'Print', 39], ['undo', 'Undo', 38],
];
const sketchTools: [string, string, boolean][] = [
  ['line', 'Line', true], ['circle', 'Circle', true], ['spline', 'Spline', true], ['plane', 'Plane', false],
  ['rect', 'Rectangle', true], ['arc', 'Arc', true], ['ellipse', 'Ellipse', true], ['text', 'Text', false],
  ['slot', 'Slot', true], ['polygon', 'Polygon', false], ['fillet', 'Fillet', true], ['point', 'Point', false],
];
const views: [string, string, number, boolean][] = [
  ['zoomFit', 'Zoom to Fit', 26, false], ['zoomArea', 'Zoom to Area', 26, false], ['prevView', 'Previous View', 26, false],
  ['section', 'Section View', 25, false], ['annView', 'Annotation Views', 27, false], ['viewCube', 'View Orientation', 40, true],
  ['display', 'Display Style', 40, true], ['hide', 'Hide/Show Items', 40, true], ['appearOff', 'Edit Appearance', 25, false],
  ['scene', 'Apply Scene', 41, true], ['monitor', 'View Settings', 40, true],
];
const miniTools: [string, string][] = [
  ['addSel', 'Select Other'], ['smartMate', 'Display Relations'], ['newNote', 'New Note'], ['zoomSel', 'Zoom to Selection'],
  ['sketchDim', 'Fully Define Sketch'], ['autoDim', 'Auto Dimension'], ['dim', 'Smart Dimension'], ['exit', 'Exit Sketch'], ['bodyView', 'Isolate'],
];
const textTools: [string, string][][] = [
  [['center', 'Center dimension'], ['leader', 'Offset text']],
  [['alignL', 'Left justify'], ['alignC', 'Center justify'], ['alignR', 'Right justify'], ['jTop', 'Top justify'], ['jMid', 'Middle justify'], ['jBot', 'Bottom justify']],
  [['dia', 'Diameter'], ['deg', 'Degree'], ['pm', 'Plus/Minus'], ['cl', 'Centerline']],
  [['sq', 'Square'], ['vee', 'Countersink'], ['cbore', 'Counterbore'], ['depth', 'Depth'], ['clMore', 'More symbols']],
];
const taskTabs: [string, string][] = [
  ['house', 'Resources'], ['books', 'Design Library'], ['folder', 'File Explorer'], ['palette', 'View Palette'], ['ball', 'Appearances'], ['props', 'Custom Properties'],
];

const U = ({ t }: { t: string }) => {
  const [a, b, c] = t.split('_');
  return b === undefined ? <>{a}</> : <>{a}<u>{b}</u>{c}</>;
};
const Row = ({ t, sub, icon, on, h }: { t: string; sub?: boolean; icon?: string; on?: boolean; h?: number }) => (
  <Item role="menuitem" $h={h}>
    <Slot $on={on}>{icon && <Icon n={icon} />}{on && (
      <svg width="10" height="10" viewBox="0 0 10 10" aria-hidden="true"><path d="M1.500 5l2.500 3 4.500-6" fill="none" stroke="#333" strokeWidth="2" /></svg>
    )}</Slot>
    <Grow><U t={t} /></Grow>
    {sub && <Arrow />}
  </Item>
);

const Sketch = () => (
  <Drawing aria-label="Sketch geometry">
    <g transform="translate(-238 -140)" fontFamily="Lato, sans-serif">
      <g stroke="#8c8c8c" fill="none">
        <path d="M488.500 578L832.500 147M485 574.500L755 790.500M829.500 144.500L1099 360" />
      </g>
      <path d="M488.500 578l4.500-12.500 5.500 4.500zM832.500 147l-12 7.500 6.500 4.500z" fill="#888" />
      <g stroke="#000" strokeWidth="2" fill="none"><path d="M757.500 362.500H1102V793H757.500z" /></g>
      <g stroke="#000" fill="none">
        <path d="M706.500 363V793M703 362.500H753M757.500 797V881M757 877.500H1102" />
        <path d="M703 793H753" stroke="#777" strokeWidth="2" />
      </g>
      <path d="M706.500 363l3 14h-6zM706.500 793l3-14h-6zM758 877.500l13-3v6z" />
      <text x="0" y="0" transform="translate(703 600) rotate(-90)" textAnchor="middle" fontSize="18" fontWeight="700">70</text>
      <text x="0" y="0" transform="translate(645 377) rotate(-51)" textAnchor="middle" fontSize="19" fontWeight="700" fill="#888">89,64</text>
      <path d="M757.500 609.500A183 183 0 0 1 940.500 792.500" fill="none" stroke="#4da3f5" />
      <text x="0" y="0" transform="translate(887 657) rotate(45)" fontSize="18" fill="#4da3f5" stroke="#4da3f5" strokeWidth=".4">90°</text>
      <path d="M757 609.500H771" stroke="#4da3f5" strokeWidth="3" />
      <rect x="754.500" y="606.500" width="6" height="6" fill="#4da3f5" stroke="#000" />
      <circle cx="771" cy="610" r="3" fill="#4da3f5" stroke="#000" />
      <path d="M757.500 793V764M757.500 793H768" stroke="#f00" strokeWidth="2" />
      <path d="M757.500 760l2.500 10h-5zM774 793.500l-9-2.500v5z" fill="#f00" />
      <path d="M276.500 950V932h3v18z" fill="#5fae5f" stroke="#1c5c1c" />
      <path d="M278 923l4 9h-8z" fill="#1b6e1b" stroke="#0f420f" />
      <path d="M281 951h18v3h-18z" fill="#e66" stroke="#a11" />
      <path d="M308 952.500l-9-4v8z" fill="#c81616" />
      <circle cx="278" cy="952.500" r="4.500" fill="#15158c" />
      <text x="278" y="920" fontSize="11" textAnchor="middle" fill="#0a7a0a">Y</text>
      <text x="311.500" y="957" fontSize="11" textAnchor="middle" fill="#e00">X</text>
      <text x="249" y="1005" fontSize="13" fontWeight="900" fill="#111">*Front</text>
    </g>
  </Drawing>
);

export default function App() {
  return (
    <Page>
      <Global />
      <TitleBar>
        <Logo>
          <svg width="29" height="29" viewBox="0 0 29 29" aria-hidden="true">
            <path d="M9 2.500Q19-.5 18 3.500 15 8 8 10.500M10 10Q18 8.500 16 15 12 24 2 26.500 7 22 10.500 12M28 11h-5q-6 0-3 5l4 3q3 6-8 6.500" fill="none" stroke="#d9291f" strokeWidth="2.600" />
          </svg>
          <LogoWord>SOLID<Thin>WORKS</Thin></LogoWord>
        </Logo>
        <Menus aria-label="Main menu">
          {['File', 'Edit', 'View', 'Insert', 'Tools', 'Window', 'Help'].map((t) => <MenuLink key={t}>{t}</MenuLink>)}
          <IconBtn $w={32} aria-label="Keep menu visible"><Icon n="pin" s={14} /></IconBtn>
        </Menus>
        <Quick>
          {qat.map(([n, label, w]) => (
            <ViewItem key={n} $w={w} aria-label={label}><Icon n={n} /><Caret $w={14} /></ViewItem>
          ))}
          <SelectTool>
            <SelectMain $w={26} aria-label="Select"><Icon n="cursor" /></SelectMain>
            <SelectDrop aria-label="Select options"><Caret $w={8} /></SelectDrop>
          </SelectTool>
          <IconBtn $w={26} aria-label="Rebuild"><Icon n="light" /></IconBtn>
          <IconBtn $w={26} aria-label="File Properties"><Icon n="list" s={18} /></IconBtn>
          <IconBtn $w={24} aria-label="Options"><Icon n="gear" s={18} /></IconBtn>
          <Caret $w={14} />
        </Quick>
        <DocTitle>Sketch1 of Part1.SLDPRT *</DocTitle>
        <SearchBox>
          <Icon n="chat" s={17} />
          <SearchInput placeholder="Search Community Forum" aria-label="Search Community Forum" />
          <IconBtn $w={24} aria-label="Search"><Icon n="search" /></IconBtn>
          <Caret $w={12} />
        </SearchBox>
        <WinControls>
          <HelpMark aria-label="Help">?</HelpMark>
          <Caret $w={17} />
          <IconBtn $w={24} aria-label="Minimize"><Icon n="min" s={18} /></IconBtn>
          <IconBtn $w={28} aria-label="Restore"><Icon n="restore" s={18} /></IconBtn>
          <IconBtn $w={25} aria-label="Close"><Icon n="close" s={18} /></IconBtn>
        </WinControls>
      </TitleBar>

      <Ribbon>
        <Commands>
          <ExitTool>
            <ExitMain><Icon n="exitLight" />{'Exit\nSketch'}</ExitMain>
            <ExitDrop aria-label="Exit Sketch options"><Caret $w={10} /></ExitDrop>
          </ExitTool>
          <Command $w={65}><Icon n="dim" />{'Smart\nDimension'}<CommandCaret><Caret /></CommandCaret></Command>
          <Rule />
          <SketchTools>
            {sketchTools.map(([n, label, drop]) => (
              <ToolCell key={n} aria-label={label}><Icon n={n} />{drop && <Caret />}</ToolCell>
            ))}
          </SketchTools>
          <Rule />
          <Command $w={49}>
            <Icon n="trim" />
            <Lines><span><u>T</u>rim</span><span>Entities</span></Lines>
            <CommandCaret><Caret /></CommandCaret>
          </Command>
          <Command $w={50}><Icon n="convert" />{'Convert\nEntities'}<CommandCaret><Caret /></CommandCaret></Command>
          <Command $w={48} $low><Icon n="offset" />{'Offset\nEntities'}</Command>
          <Command $w={48} $low $off disabled><Icon n="offsetSurf" />{'Offset\nOn\nSurface'}</Command>
          <PatternTools>
            <PatternRow><Icon n="mirror" /><Grow>Mirror Entities</Grow></PatternRow>
            <PatternRow><Icon n="pattern" /><Grow>Linear Sketch Pattern</Grow><Caret $w={18} /></PatternRow>
            <PatternRow><Icon n="move" /><Grow>Move Entities</Grow><Caret $w={18} /></PatternRow>
          </PatternTools>
          <Rule />
          <Command $w={86}><Icon n="relations" />{'Display/Delete\nRelations'}<CommandCaret><Caret /></CommandCaret></Command>
          <Command $w={44} $low><Icon n="repair" />{'Repair\nSketch'}</Command>
          <Rule />
          <Command $w={43}><Icon n="snaps" />{'Quick\nSnaps'}<CommandCaret><Caret /></CommandCaret></Command>
          <Rule />
          <Command $w={46} $low><Icon n="rapid" />{'Rapid\nSketch'}</Command>
          <Command $w={58} $low><Icon n="instant" />Instant2D</Command>
          <Command $w={60} $low><Icon n="shaded" />{'Shaded\nSketch\nContours'}</Command>
        </Commands>
        <RibbonSide>
          <Capture>
            <Grip $h={26} />
            <IconBtn $w={20} aria-label="Image Capture"><Icon n="snapshot" s={19} /></IconBtn>
            <IconBtn $w={20} aria-label="Record Video"><Icon n="record" s={19} /></IconBtn>
            <IconBtn $w={20} aria-label="Stop Video"><Icon n="stop" s={19} /></IconBtn>
          </Capture>
        </RibbonSide>
      </Ribbon>

      <TabRow>
        <ManagerTabs>
          <ManagerTab $w={60}>Features</ManagerTab>
          <ManagerTab $w={56} $on>Sketch</ManagerTab>
          <ManagerTab $w={60}>Evaluate</ManagerTab>
          <ManagerTab $w={66}>DimXpert</ManagerTab>
          <ManagerTab $w={133}>SOLIDWORKS Add-Ins</ManagerTab>
          <ManagerTab $w={117}>SOLIDWORKS MBD</ManagerTab>
        </ManagerTabs>
        <ViewBar>
          {views.map(([n, label, w, drop]) => (
            <ViewItem key={n} $w={w} aria-label={label}><Icon n={n} s={19} />{drop && <Caret $w={16} $c="#777" />}</ViewItem>
          ))}
        </ViewBar>
        <DocControls>
          <IconBtn aria-label="Collapse left pane"><Icon n="paneL" s={17} /></IconBtn>
          <IconBtn aria-label="Collapse right pane"><Icon n="paneR" s={17} /></IconBtn>
          <IconBtn aria-label="Minimize document"><Icon n="min" s={18} /></IconBtn>
          <IconBtn aria-label="Restore document"><Icon n="restore" s={18} /></IconBtn>
          <IconBtn aria-label="Close document"><Icon n="close" s={18} /></IconBtn>
        </DocControls>
      </TabRow>

      <Work>
        <Panel>
          <PanelGrip><Dot /></PanelGrip>
          <PmTabs $top={4} $h={26}>
            <PmTab $w={40} aria-label="FeatureManager"><Icon n="part" /></PmTab>
            <PmTab $w={40} $on aria-label="PropertyManager"><Icon n="props" s={19} /></PmTab>
            <PmTab $w={40} aria-label="ConfigurationManager"><Icon n="tree" s={18} /></PmTab>
            <PmTab $w={40} aria-label="DimXpertManager"><Icon n="target" s={19} /></PmTab>
            <PmTab $w={40} aria-label="DisplayManager"><Icon n="ballDim" /></PmTab>
          </PmTabs>
          <PmHead>
            <Icon n="dim" />
            <PmTitle>Dimension</PmTitle>
            <IconBtn aria-label="Help on Dimension"><Icon n="help" s={17} /></IconBtn>
          </PmHead>
          <Accept><IconBtn aria-label="OK"><Icon n="check" s={15} /></IconBtn></Accept>
          <PmTabs $top={0} $h={25}>
            <PmTab $w={41} $on>Value</PmTab>
            <PmTab $w={52}>Leaders</PmTab>
            <PmTab $w={42}>Other</PmTab>
          </PmTabs>
          <Group $h={88} $top={16}>
            <GroupHead>Style<Chevron up /></GroupHead>
            <StyleRow>
              <Tool aria-label="Apply default attributes"><Icon n="styApply" /></Tool>
              <Tool aria-label="Add style"><Icon n="styAdd" /></Tool>
              <Tool aria-label="Delete style"><Icon n="styDel" /></Tool>
              <Tool aria-label="Save style"><Icon n="stySave" /></Tool>
              <Tool aria-label="Load style"><Icon n="styLoad" /></Tool>
            </StyleRow>
            <Field $top={5}>
              <FieldIcon />
              <SelectWrap><Select aria-label="Style"><option>&lt;NONE&gt;</option></Select><Chevron /></SelectWrap>
            </Field>
          </Group>
          <Group $h={94}>
            <GroupHead>Tolerance/Precision<Chevron up /></GroupHead>
            <Field $top={2}>
              <FieldIcon><Icon n="tol" /></FieldIcon>
              <SelectWrap><Select aria-label="Tolerance type"><option>None</option></Select><Chevron /></SelectWrap>
            </Field>
            <Field $top={11}>
              <FieldIcon><Icon n="prec" /></FieldIcon>
              <SelectWrap><Select aria-label="Unit precision"><option>.12 (Document)</option></Select><Chevron /></SelectWrap>
            </Field>
          </Group>
          <Group $h={89}>
            <GroupHead>Primary Value<Chevron up /></GroupHead>
            <Field>
              <FieldIcon />
              <TextBox aria-label="Dimension name" defaultValue="D4@Sketch1" />
            </Field>
            <Field $top={8}>
              <FieldIcon />
              <ValueBox aria-label="Dimension value" defaultValue="90.00deg" disabled />
              <Spin>
                <SpinBtn aria-label="Increase"><Chevron up s={9} /></SpinBtn>
                <SpinBtn aria-label="Decrease"><Chevron s={9} /></SpinBtn>
              </Spin>
            </Field>
          </Group>
          <Group $h={260}>
            <GroupHead>Dimension Text<Chevron up /></GroupHead>
            <DimBlock>
              <DimButtons $gap={4}>
                <Tool aria-label="Add parentheses"><Icon n="paren" /></Tool>
                <Tool aria-label="Inspection dimension"><Icon n="oval" /></Tool>
              </DimButtons>
              <DimText aria-label="Dimension text" defaultValue="<DIM>" />
            </DimBlock>
            <DimBlock>
              <DimButtons $gap={0}>
                <Tool aria-label="Add parentheses below"><Icon n="paren" /></Tool>
                <Tool $join aria-label="Inspection dimension below"><Icon n="oval" /></Tool>
              </DimButtons>
              <DimText aria-label="Second line text" />
            </DimBlock>
            {textTools.map((row, i) => (
              <ToolRow key={row[0][0]} $top={[8, 3, 0, 0][i]}>
                {row.map(([n, label]) => (
                  <Tool key={n} aria-label={label} $on={n === 'alignC' || n === 'jMid'}><Icon n={n} /></Tool>
                ))}
              </ToolRow>
            ))}
          </Group>
        </Panel>

        <Viewport>
          <Sketch />
          <SplitHandle><Dot /></SplitHandle>
          <Confirm>
            <svg width="45" height="36" viewBox="0 0 45 36" aria-hidden="true">
              <path d="M22 2H2V16Q2 26 12 26H22" fill="none" stroke={B} strokeWidth="2" />
              <path d="M23 25l9-10v5q9 0 12-6-1 14-12 15v6z" fill={L} stroke={B} strokeWidth="1.500" />
            </svg>
            <ConfirmCancel>
              <svg width="25" height="25" viewBox="0 0 25 25" aria-hidden="true">
                <path d="M3 3l19 19M22 3L3 22" stroke="#c03a30" strokeWidth="8" />
                <path d="M4 4l17 17M21 4L4 21" stroke="#e8584c" strokeWidth="5" />
              </svg>
            </ConfirmCancel>
          </Confirm>
          <TaskPane aria-label="Task pane">
            {taskTabs.map(([n, label], i) => (
              <TaskTab key={n} $on={i === 0} aria-label={label}><Icon n={n} s={19} /></TaskTab>
            ))}
          </TaskPane>
          <Popup>
            <MiniBar>
              {miniTools.map(([n, label]) => (
                <IconBtn key={n} aria-label={label}><Icon n={n} /></IconBtn>
              ))}
            </MiniBar>
            <Menu role="menu">
              <Row t="Selection Tools" sub h={26} />
              <Row t="Zoom/Pan/Rotate" sub h={25} />
              <Row t="_D_isplay Grid" icon="grid" />
              <Split />
              <Row t="_R_ecent Commands" sub />
              <Row t="Sketch Entities" sub />
              <Row t="_M_ore Dimensions" sub />
              <Heading>Relations</Heading>
              <Row t="D_i_splay/Delete Relations..." icon="relations" />
              <Row t="Sketch Tools" sub />
              <Row t="Delete" icon="del" />
              <Heading $gap>Dimension (D4@Sketch1@Part1.SLDPRT)</Heading>
              <Row t="Dri_v_en" on />
              <Row t="M_a_rk For Drawing" on />
              <Row t="Display Options" sub />
              <Row t="_A_nnotations" sub />
              <Heading>Selected Entity (Dimension)</Heading>
              <Row t="Select Annotation View _(_Unassigned Items)" />
              <More aria-label="Show more">
                <svg width="8" height="10" viewBox="0 0 8 10" aria-hidden="true"><path d="M1.500 1L4 3.500 6.500 1M1.500 5.500L4 8l2.500-2.500" fill="none" stroke="#111" strokeWidth="1.500" /></svg>
              </More>
            </Menu>
            <Highlight />
          </Popup>
        </Viewport>
      </Work>

      <ModelTabs>
        <TealMark />
        {['M3 2v10M11 2L5 7l6 5z', 'M10 2L4 7l6 5z', 'M4 2l6 5-6 5z', 'M11 2v10M3 2l6 5-6 5z'].map((d, i) => (
          <NavBtn key={d} aria-label={['First tab', 'Previous tab', 'Next tab', 'Last tab'][i]}>
            <svg width="13" height="13" viewBox="0 0 14 14" aria-hidden="true"><path d={d} fill="#9a9a9e" stroke="#85858a" /></svg>
          </NavBtn>
        ))}
        <ModelTab $w={58} $on>Model</ModelTab>
        <ModelTab $w={68}>3D Views</ModelTab>
        <ModelTab $w={108} $r={6}>Motion Study 1</ModelTab>
      </ModelTabs>
      <FilterBar>
        <Grip $h={26} />
        <IconBtn $w={36} aria-label="Toggle filters"><Icon n="funnelOff" s={17} /></IconBtn>
        <IconBtn $w={20} aria-label="Clear filters"><Icon n="funnelsOff" /></IconBtn>
        <IconBtn $w={32} aria-label="All filters"><Icon n="funnels" /></IconBtn>
        <SelectTool>
          <SelectMain $w={28} aria-label="Select"><Icon n="cursor" /></SelectMain>
          <SelectDrop aria-label="Select options"><Caret $w={8} /></SelectDrop>
        </SelectTool>
        <IconBtn $w={28} aria-label="Magnified selection"><Icon n="multi" /></IconBtn>
        <Rule $h={22} $m={1} />
        <FilterBtns>
          {filters.map((f, i) => (
            <FilterBtn key={filterNames[i]} aria-label={`Filter ${filterNames[i]}`}>
              <svg viewBox="0 0 20 20" width="20" height="20" aria-hidden="true">{f}<Funnel /></svg>
            </FilterBtn>
          ))}
        </FilterBtns>
        <Rule $h={30} $m={2} />
      </FilterBar>
      <StatusBar>
        <Grow>Control visibility of the sketch grid.</Grow>
        <Status $w={73}>24.63mm</Status>
        <Status $w={65}>21.14mm</Status>
        <Status $w={48}>0mm</Status>
        <Status $w={102}>Fully Defined</Status>
        <Status $w={103}>Editing Sketch1</Status>
        <Status $w={49}><Icon n="light" s={14} /></Status>
        <Status $w={48}>MMGS</Status>
        <Status $w={79}><Caret $w={18} $up /></Status>
        <Icon n="web" s={16} />
      </StatusBar>
    </Page>
  );
}
